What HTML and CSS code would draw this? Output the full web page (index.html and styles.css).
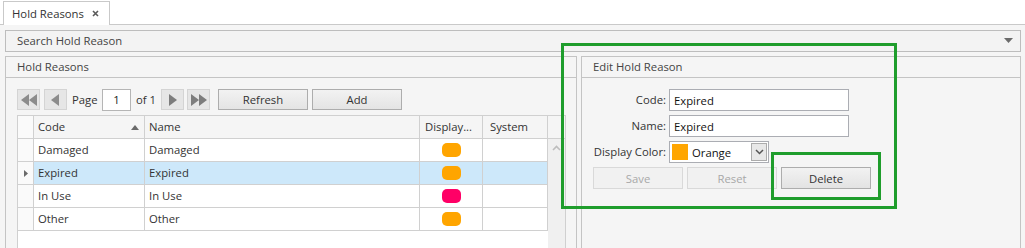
FILE: index.html
```html
<!DOCTYPE html>
<html>
<head>
  <title>Hold Reasons</title>
  <link rel="stylesheet" href="styles.css">
</head>
<body>
  <div class="tabstrip">
    <div class="tab">
      <span>Hold Reasons</span>
      <svg class="tab-close" width="7" height="7" viewBox="0 0 7 7"><path d="M1 1L6 6M6 1L1 6" stroke="#5a5a5a" stroke-width="1.6"/></svg>
    </div>
  </div>

  <div class="content">
    <div class="search-bar">
      <span>Search Hold Reason</span>
      <svg width="9" height="5" viewBox="0 0 9 5"><path d="M0 0H9L4.5 5Z" fill="#6b6b6b"/></svg>
    </div>

    <div class="panels">
      <section class="panel list-panel">
        <div class="panel-header">Hold Reasons</div>
        <div class="panel-body">
          <div class="pager">
            <button class="nav-btn">
              <svg width="18" height="12" viewBox="0 0 18 12"><path d="M9 0V12L1 6Z M17 0V12L9 6Z" fill="#8c8c8c"/></svg>
            </button>
            <button class="nav-btn prev-btn">
              <svg width="9" height="12" viewBox="0 0 9 12"><path d="M8 0V12L0 6Z" fill="#8c8c8c"/></svg>
            </button>
            <span class="pager-text page-label">Page</span>
            <input class="page-input" type="text" value="1">
            <span class="pager-text page-count">of 1</span>
            <button class="nav-btn">
              <svg width="9" height="12" viewBox="0 0 9 12"><path d="M1 0V12L9 6Z" fill="#7d7d7d"/></svg>
            </button>
            <button class="nav-btn last-btn">
              <svg width="18" height="12" viewBox="0 0 18 12"><path d="M1 0V12L9 6Z M9 0V12L17 6Z" fill="#7d7d7d"/></svg>
            </button>
            <button class="tool-btn refresh-btn">Refresh</button>
            <button class="tool-btn">Add</button>
          </div>

          <div class="grid">
            <div class="grid-head">
              <div class="cell sel"></div>
              <div class="cell code">Code
                <svg class="sort" width="8" height="5" viewBox="0 0 8 5"><path d="M0 5H8L4 0Z" fill="#6a6a6a"/></svg>
              </div>
              <div class="cell">Name</div>
              <div class="cell">Display...</div>
              <div class="cell">System</div>
              <div class="cell filler"></div>
            </div>
            <div class="grid-body">
              <div class="rows">
                <div class="row">
                  <div class="cell sel"></div>
                  <div class="cell code">Damaged</div>
                  <div class="cell">Damaged</div>
                  <div class="cell swatch-cell"><span class="pill orange"></span></div>
                  <div class="cell"></div>
                </div>
                <div class="row selected">
                  <div class="cell sel">
                    <svg width="4" height="7" viewBox="0 0 4 7"><path d="M0 0V7L4 3.5Z" fill="#6a6a6a"/></svg>
                  </div>
                  <div class="cell code">Expired</div>
                  <div class="cell">Expired</div>
                  <div class="cell swatch-cell"><span class="pill orange"></span></div>
                  <div class="cell"></div>
                </div>
                <div class="row">
                  <div class="cell sel"></div>
                  <div class="cell code">In Use</div>
                  <div class="cell">In Use</div>
                  <div class="cell swatch-cell"><span class="pill pink"></span></div>
                  <div class="cell"></div>
                </div>
                <div class="row">
                  <div class="cell sel"></div>
                  <div class="cell code">Other</div>
                  <div class="cell">Other</div>
                  <div class="cell swatch-cell"><span class="pill orange"></span></div>
                  <div class="cell"></div>
                </div>
              </div>
              <div class="vscroll">
                <svg width="9" height="6" viewBox="0 0 9 6"><path d="M1 5L4.5 1.5L8 5" stroke="#bdbdbd" stroke-width="1.6" fill="none"/></svg>
              </div>
            </div>
          </div>
        </div>
      </section>

      <section class="panel edit-panel">
        <div class="panel-header">Edit Hold Reason</div>
        <div class="panel-body edit-body">
          <div class="form">
            <label for="code">Code:</label>
            <input id="code" class="field" type="text" value="Expired">
            <label for="name">Name:</label>
            <input id="name" class="field" type="text" value="Expired">
            <label>Display Color:</label>
            <div class="color-select">
              <span class="color-box"></span>
              <span class="color-name">Orange</span>
              <span class="drop-btn">
                <svg width="9" height="6" viewBox="0 0 9 6"><path d="M1 1L4.5 4.5L8 1" stroke="#555" stroke-width="1.5" fill="none"/></svg>
              </span>
            </div>
          </div>
          <div class="form-actions">
            <button class="action-btn" disabled>Save</button>
            <button class="action-btn" disabled>Reset</button>
            <button class="action-btn">Delete</button>
          </div>
        </div>
      </section>
    </div>
  </div>

  <div class="mark mark-edit"></div>
  <div class="mark mark-delete"></div>
</body>
</html>
```

FILE: styles.css
```css
body {
  margin: 0;
  font-family: "Open Sans", "Noto Sans", sans-serif;
  font-size: 11.3px;
  color: #333;
  background-color: #fff;
  height: 248px;
  overflow: hidden;
  position: relative;
}

button,
input {
  font-family: inherit;
  font-size: 11.3px;
}

/* tab strip */
.tabstrip {
  display: flex;
  align-items: flex-end;
  height: 24px;
  border-bottom: 1px solid #c9c9c9;
  padding-left: 3px;
}

.tab {
  display: flex;
  align-items: center;
  box-sizing: border-box;
  height: 24px;
  width: 107px;
  margin-bottom: -1px;
  padding: 0 0 1px 8px;
  border: 1px solid #c9c9c9;
  border-bottom: none;
  background-color: #fff;
  color: #333;
}

.tab-close {
  margin-left: auto;
  margin-right: 10px;
}

/* main area */
.content {
  background-color: #f5f5f5;
  padding: 5px 4px 0 5px;
  height: 218px;
}

.search-bar {
  display: flex;
  align-items: center;
  justify-content: space-between;
  box-sizing: border-box;
  height: 22px;
  padding: 0 7px 1px 11px;
  border: 1px solid #bdbdbd;
  background-color: #f3f3f3;
  color: #444;
}

.panels {
  display: flex;
  gap: 4px;
  margin-top: 4px;
  height: 200px;
}

.panel {
  box-sizing: border-box;
  border: 1px solid #c4c4c4;
  background-color: #f5f5f5;
}

.list-panel {
  width: 572px;
}

.edit-panel {
  flex: 1;
}

.panel-header {
  box-sizing: border-box;
  height: 21px;
  line-height: 20px;
  padding-left: 11px;
  border-bottom: 1px solid #c4c4c4;
  color: #444;
}

.panel-body {
  padding: 11px 10px 0 11px;
}

/* pager */
.pager {
  display: flex;
  align-items: center;
  height: 21px;
}

.nav-btn {
  display: flex;
  align-items: center;
  justify-content: center;
  box-sizing: border-box;
  width: 23px;
  height: 21px;
  padding: 0;
  border: 1px solid #d4d4d4;
  background-color: #e6e6e6;
}

.prev-btn {
  margin-left: 4px;
}

.last-btn {
  margin-left: 3px;
}

.pager-text {
  color: #333;
  margin-left: 5px;
}

.page-label {
  width: 30px;
}

.page-count {
  width: 25px;
}

.page-input {
  box-sizing: border-box;
  width: 29px;
  height: 22px;
  padding: 0;
  border: 1px solid #b5b5b5;
  text-align: center;
  color: #222;
}

.tool-btn {
  box-sizing: border-box;
  width: 90px;
  height: 21px;
  margin-left: 4px;
  padding: 0;
  border: 1px solid #adadad;
  background: linear-gradient(#f2f2f2, #e4e4e4);
  color: #333;
}

.refresh-btn {
  margin-left: 8px;
}

/* grid */
.grid {
  box-sizing: border-box;
  width: 549px;
  height: 140px;
  margin-top: 5px;
  border-left: 1px solid #d0d0d0;
  border-top: 1px solid #d0d0d0;
  border-right: 1px solid #d0d0d0;
  display: flex;
  flex-direction: column;
}

.grid-head,
.row {
  display: grid;
  grid-template-columns: 16px 111px 275px 63px 65px;
}

.grid-head {
  grid-template-columns: 16px 111px 275px 63px 65px 17px;
  background-color: #f5f5f5;
}

.cell {
  box-sizing: border-box;
  height: 23px;
  line-height: 22px;
  padding-left: 4px;
  border-right: 1px solid #d0d0d0;
  border-bottom: 1px solid #d0d0d0;
  white-space: nowrap;
  overflow: hidden;
}

.grid-head .cell:nth-child(4) {
  padding-left: 5px;
}

.grid-head .cell:nth-child(5) {
  padding-left: 7px;
}

.grid-head .filler {
  border-right: none;
}

.cell.code {
  position: relative;
}

.sort {
  position: absolute;
  right: 5px;
  top: 9px;
}

.cell.sel {
  display: flex;
  align-items: center;
  padding-left: 6px;
  background-color: #fafafa;
}

.grid-body {
  display: flex;
  flex: 1;
}

.rows {
  flex: 1;
  background-color: #fff;
}

.row.selected .cell {
  background-color: #cde8fa;
}

.row.selected .cell.sel {
  background-color: #fafafa;
}

.swatch-cell {
  display: flex;
  align-items: center;
  justify-content: center;
  padding-left: 0;
}

.pill {
  width: 19px;
  height: 14px;
  border-radius: 5px;
}

.orange {
  background-color: #ffa500;
}

.pink {
  background-color: #ff0066;
}

.vscroll {
  width: 17px;
  background-color: #f0f0f0;
  display: flex;
  justify-content: center;
  padding-top: 6px;
  box-sizing: border-box;
}

/* edit form */
.form {
  display: grid;
  grid-template-columns: 73px 180px;
  grid-auto-rows: 22px;
  column-gap: 3px;
  row-gap: 4px;
}

.form label {
  text-align: right;
  line-height: 22px;
  white-space: nowrap;
  color: #333;
}

.field {
  box-sizing: border-box;
  height: 22px;
  padding: 0 0 0 4px;
  border: 1px solid #abadb3;
  color: #111;
  background-color: #fff;
}

.color-select {
  display: flex;
  align-items: center;
  box-sizing: border-box;
  width: 100px;
  height: 22px;
  border: 1px solid #abadb3;
  background-color: #fff;
}

.color-box {
  width: 16px;
  height: 16px;
  margin-left: 2px;
  background-color: #ffa500;
}

.color-name {
  flex: 1;
  margin-left: 4px;
  color: #111;
}

.drop-btn {
  display: flex;
  align-items: center;
  justify-content: center;
  box-sizing: border-box;
  width: 16px;
  height: 18px;
  margin-right: 1px;
  border: 1px solid #acacac;
  background-color: #e8e8e8;
}

.form-actions {
  display: flex;
  gap: 4px;
  margin-top: 4px;
}

.action-btn {
  box-sizing: border-box;
  width: 90px;
  height: 22px;
  padding: 0;
  border: 1px solid #adadad;
  background: linear-gradient(#f2f2f2, #e3e3e3);
  color: #333;
}

.action-btn:disabled {
  border-color: #d9d9d9;
  background: #f1f1f1;
  color: #a8a8a8;
}

/* annotation boxes */
.mark {
  position: absolute;
  box-sizing: border-box;
  border: 3px solid #1f9d2c;
  pointer-events: none;
}

.mark-edit {
  left: 561px;
  top: 43px;
  width: 336px;
  height: 166px;
}

.mark-delete {
  left: 771px;
  top: 152px;
  width: 110px;
  height: 48px;
}
```
